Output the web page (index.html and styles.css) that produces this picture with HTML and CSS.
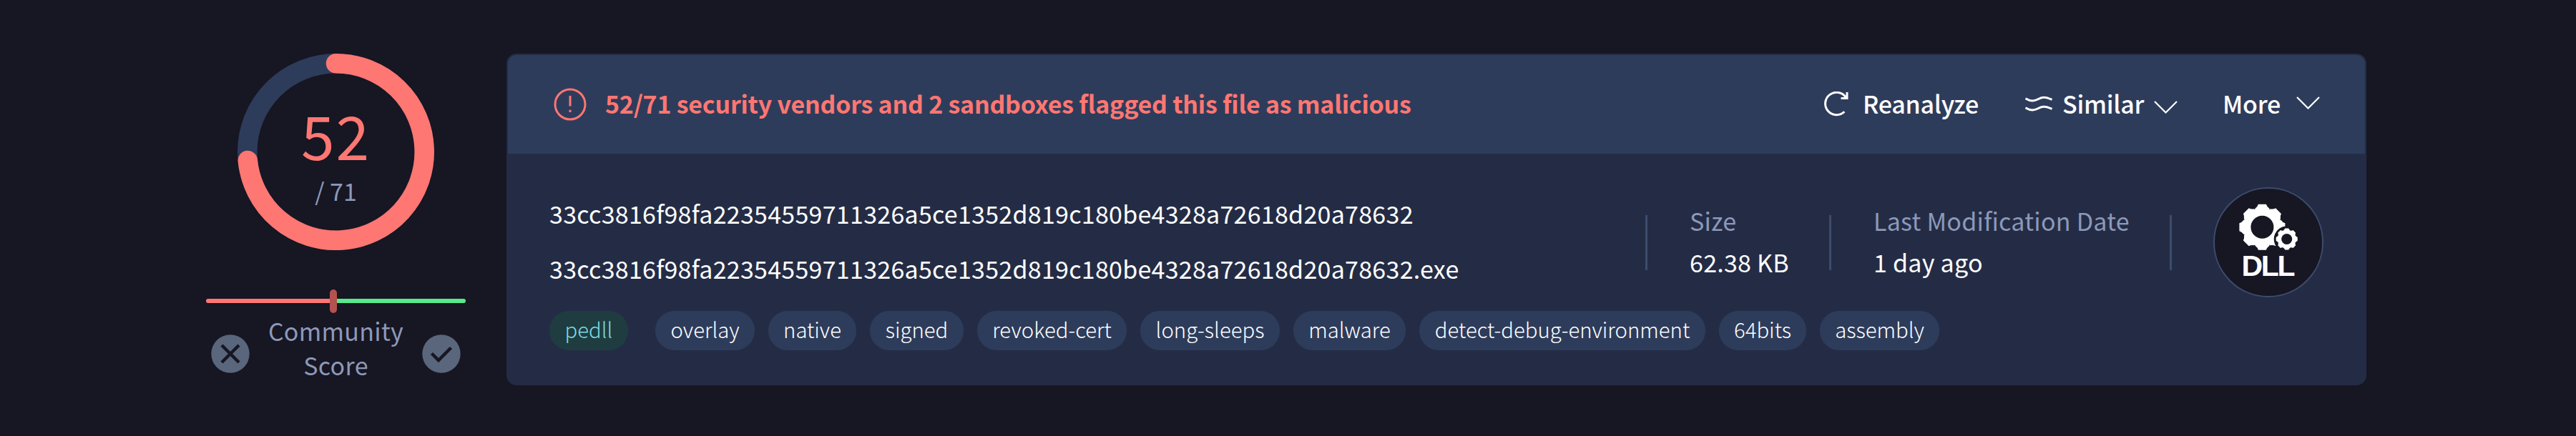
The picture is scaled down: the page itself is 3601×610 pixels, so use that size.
FILE: index.html
```html
<!DOCTYPE html>
<html lang="en">
<head>
<meta charset="utf-8">
<title>File report</title>
<link rel="stylesheet" href="styles.css">
</head>
<body>
<main class="report">
  <aside class="score">
    <div class="gauge">
      <svg class="ring" viewBox="0 0 275 275">
        <circle class="ring-track" cx="137.5" cy="137.5" r="123.75"/>
        <path class="ring-value" d="M137.5 13.75A123.75 123.75 0 1 1 14.3 149.5"/>
      </svg>
      <div class="gauge-text">
        <div class="detections"><span class="t">52</span></div>
        <div class="total"><span class="t">/ 71</span></div>
      </div>
    </div>
    <div class="balance"><span class="bad"></span><span class="good"></span><span class="knob"></span></div>
    <div class="community">
      <svg class="vote" viewBox="0 0 54 54"><circle cx="27" cy="27" r="26.7"/><path d="M15 15L39 39M39 15L15 39"/></svg>
      <div class="community-label"><span class="t">Community</span><br><span class="t">Score</span></div>
      <svg class="vote" viewBox="0 0 54 54"><circle cx="27" cy="27" r="26.7"/><path d="M13.500 26.500L23 36L40.500 18.500"/></svg>
    </div>
  </aside>
  <section class="card">
    <header class="card-head">
      <svg class="alert" viewBox="0 0 46 46"><circle cx="23" cy="23" r="21"/><path d="M23 11V25.500M23 30.700V34"/></svg>
      <div class="headline"><span class="t">52/71 security vendors and 2 sandboxes flagged this file as malicious</span></div>
      <nav class="actions">
        <div class="action reanalyze">
          <svg class="i-reload" viewBox="0 0 36 36"><path d="M28.300 28.200A15.700 15.700 0 1 1 30.500 8.500M32 1V9.500H23.500"/></svg>
          <span class="t">Reanalyze</span>
        </div>
        <div class="action similar">
          <svg class="i-waves" viewBox="0 0 38 24"><path d="M.5 3.700C6 7.200 12 8 17.500 5S27 .5 37.500 5.500M.5 16.700C6 20.200 12 21 17.500 18S27 13.500 37.500 18.500"/></svg>
          <span class="t">Similar</span>
          <svg class="i-chevron low" viewBox="0 0 33 18"><path d="M1 1L16.500 16.500L32 1"/></svg>
        </div>
        <div class="action more">
          <span class="t">More</span>
          <svg class="i-chevron high" viewBox="0 0 33 18"><path d="M1 1L16.500 16.500L32 1"/></svg>
        </div>
      </nav>
    </header>
    <div class="card-body">
      <div class="details">
        <div class="file">
          <div class="hash"><span class="t">33cc3816f98fa22354559711326a5ce1352d819c180be4328a72618d20a78632</span></div>
          <div class="hash name"><span class="t">33cc3816f98fa22354559711326a5ce1352d819c180be4328a72618d20a78632.exe</span></div>
        </div>
        <div class="facts">
          <dl class="fact size"><dt><span class="t">Size</span></dt><dd><span class="t">62.38 KB</span></dd></dl>
          <dl class="fact date"><dt><span class="t">Last Modification Date</span></dt><dd><span class="t">1 day ago</span></dd></dl>
          <div class="fact kind">
            <svg class="dll" viewBox="0 0 154 154">
              <defs>
                <path id="tooth" d="M-5.500 -32H5.500Q6.500 -28.500 10 -26V-22H-10V-26Q-6.500 -28.500 -5.500 -32Z"/>
                <g id="gear">
                  <circle r="26.800"/>
                  <use href="#tooth"/><use href="#tooth" transform="rotate(45)"/><use href="#tooth" transform="rotate(90)"/><use href="#tooth" transform="rotate(135)"/>
                  <use href="#tooth" transform="rotate(180)"/><use href="#tooth" transform="rotate(225)"/><use href="#tooth" transform="rotate(270)"/><use href="#tooth" transform="rotate(315)"/>
                </g>
              </defs>
              <circle class="dll-disc" cx="77" cy="77" r="76"/>
              <g class="gear" transform="translate(68.400 55.700)"><use href="#gear"/><circle class="hole" r="16"/></g>
              <circle class="hole" cx="102.700" cy="72.500" r="18"/>
              <g class="gear" transform="translate(102.700 72.500) scale(.47)"><use href="#gear"/><circle class="hole" r="16"/></g>
              <text x="77" y="123.700" textLength="75">DLL</text>
            </svg>
          </div>
        </div>
      </div>
      <div class="tags">
        <span class="tag type">pedll</span>
        <span class="tag w139">overlay</span>
        <span class="tag w123">native</span>
        <span class="tag w131">signed</span>
        <span class="tag w209">revoked-cert</span>
        <span class="tag w195">long-sleeps</span>
        <span class="tag w157">malware</span>
        <span class="tag w400">detect-debug-environment</span>
        <span class="tag w122">64bits</span>
        <span class="tag w167">assembly</span>
      </div>
    </div>
  </section>
</main>
</body>
</html>
```
FILE: styles.css
```css
* { box-sizing: border-box; }
body {
  margin: 0;
  height: 610px;
  background: #171623;
  font-family: "Noto Sans CJK SC", "Noto Sans", sans-serif;
  font-size: 34px;
  line-height: 48px;
  color: #fff;
  overflow: hidden;
}
svg { display: block; flex: none; fill: none; }
.t { white-space: nowrap; }

.report { display: flex; padding: 75px 293px 0 288px; }

.score { width: 363px; margin-right: 57px; }
.gauge { display: grid; width: 275px; height: 275px; margin-left: 44px; }
.ring { grid-area: 1 / 1; width: 275px; height: 275px; }
.ring-track { stroke: #2e3c5b; stroke-width: 27.5; }
.ring-value { stroke: #ff7772; stroke-width: 27.5; stroke-linecap: round; }
.gauge-text { grid-area: 1 / 1; padding-top: 58px; text-align: center; color: #8c99b9; }
.detections { color: #ff7772; font-size: 84px; line-height: 110px; letter-spacing: 2px; }
.total { line-height: 48px; }

.balance { position: relative; display: flex; height: 6px; margin-top: 68px; border-radius: 3px; }
.bad { width: 178px; background: #ff7772; border-radius: 3px 0 0 3px; }
.good { flex: 1; background: #57e98b; border-radius: 0 3px 3px 0; }
.knob { position: absolute; left: 173px; top: -13px; width: 10px; height: 33px; border-radius: 5px; background: #b3524f; }
.community { display: flex; justify-content: space-between; align-items: center; padding: 15px 7px 0; }
.community-label { text-align: center; color: #8c99b9; letter-spacing: 0.3px; }
.vote { width: 54px; height: 54px; margin-top: 15px; }
.vote circle { fill: #5a667c; }
.vote path { stroke: #171623; stroke-width: 4.5; }

.card { width: 2600px; height: 464px; border: 2px solid #242c45; border-radius: 14px; background: #242c45; overflow: hidden; }
.card-head { display: flex; align-items: center; height: 138px; padding: 0 63px 0 64px; background: #2e3c5b; }
.alert { width: 46px; height: 46px; stroke: #ff7772; stroke-width: 3; }
.headline { margin-left: 26px; padding-bottom: 2px; color: #ff7772; font-weight: 700; letter-spacing: -0.24px; }
.actions { display: flex; align-items: center; margin-left: auto; font-weight: 500; letter-spacing: -0.24px; }
.action { display: flex; align-items: center; }
.action .t { padding-bottom: 2px; }
.reanalyze { width: 281px; }
.similar { width: 276px; }
.more { width: 136px; justify-content: space-between; }
.i-reload { width: 36px; height: 36px; margin-right: 18px; stroke: #fff; stroke-width: 3; }
.i-waves { width: 38px; height: 24px; margin-right: 14px; stroke: #fff; stroke-width: 3; }
.i-chevron { width: 33px; height: 18px; stroke: #fff; stroke-width: 2.2; }
.low { margin: 8px 0 0 14px; }
.high { margin-top: -4px; }

.card-body { height: 322px; padding: 0 58px; letter-spacing: 0.26px; }
.details { display: flex; justify-content: space-between; height: 220px; }
.file { padding-top: 60px; }
.hash { height: 48px; }
.name { margin-top: 29px; }
.tags { display: flex; gap: 19px; letter-spacing: 0; }
.tag { height: 55px; border-radius: 27px; background: #2e3c5b; line-height: 50px; font-size: 29.3px; font-weight: 300; text-align: center; white-space: nowrap; }
.type { width: 110px; margin-right: 19px; background: #1f3d40; color: #7adbe6; }
.w139 { width: 139px; }
.w123 { width: 123px; }
.w131 { width: 131px; }
.w209 { width: 209px; }
.w195 { width: 195px; }
.w157 { width: 157px; }
.w400 { width: 400px; }
.w122 { width: 122px; }
.w167 { width: 167px; }

.facts { display: flex; margin-top: 47px; height: 154px; align-items: center; }
.fact { margin: 0; display: flex; flex-direction: column; justify-content: center; height: 77px; padding: 0 0 3px 59px; border-left: 3px solid #3c4c6e; }
.fact dt { color: #8c99b9; line-height: 58px; }
.fact dd { margin: 0; line-height: 58px; }
.size { width: 257px; }
.date { width: 476px; }
.kind { padding: 0 0 0 58px; }
.dll { width: 154px; height: 154px; }
.dll-disc { fill: #171623; stroke: #3c4c6e; stroke-width: 2; }
.gear { fill: #fff; }
.hole { fill: #171623; }
.dll text { fill: #fff; font: 700 41px "Liberation Sans", sans-serif; text-anchor: middle; letter-spacing: 0; }
```
